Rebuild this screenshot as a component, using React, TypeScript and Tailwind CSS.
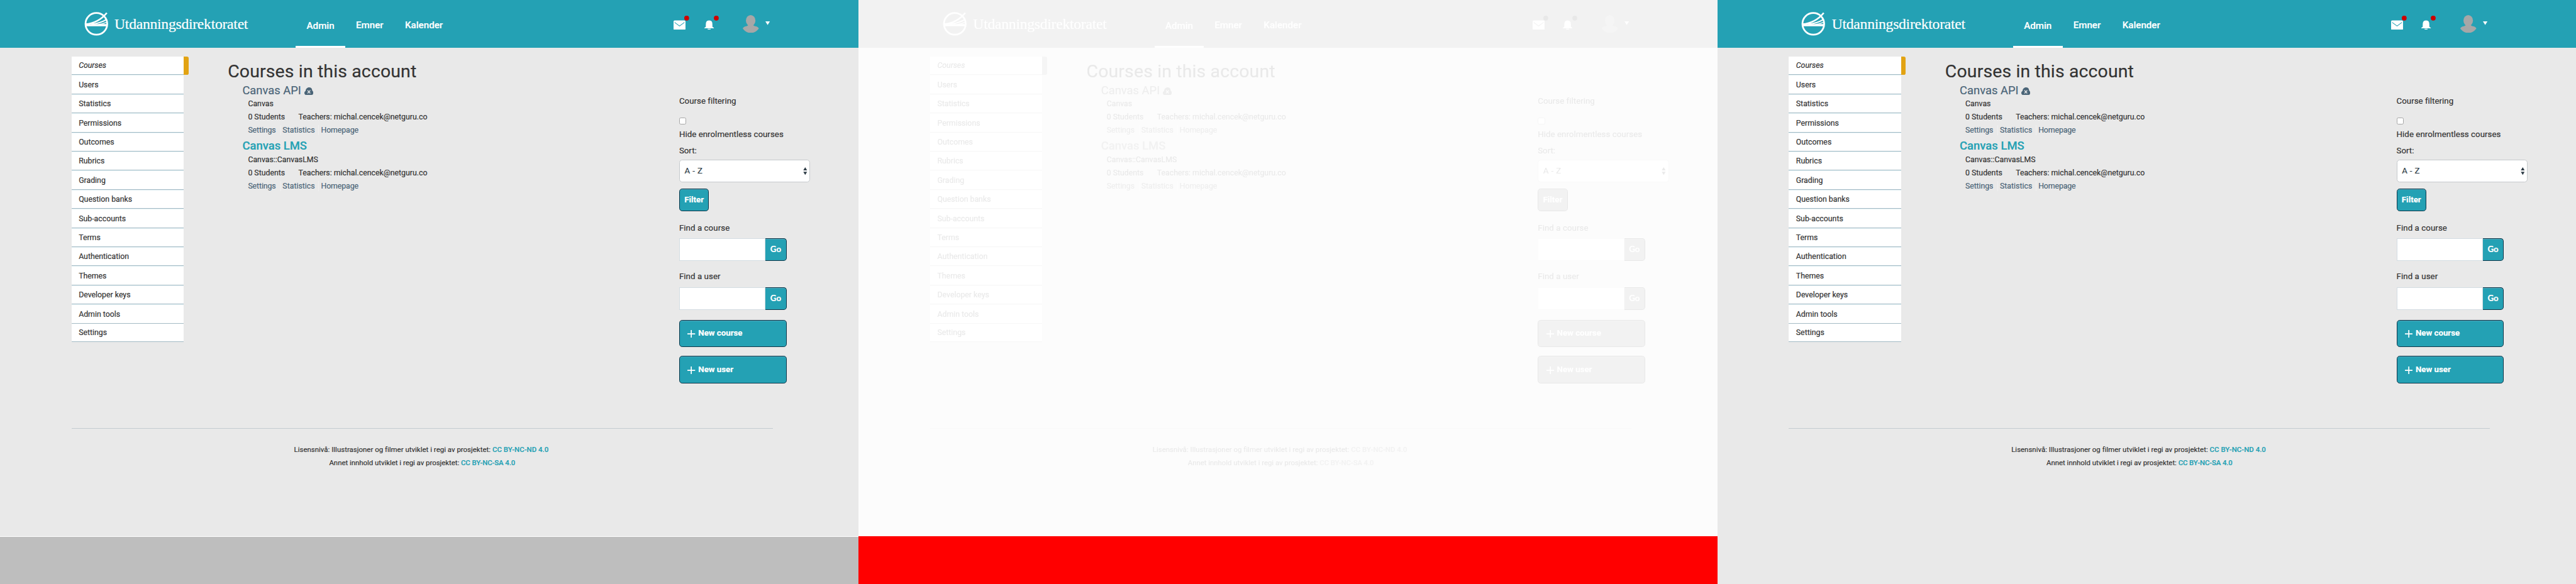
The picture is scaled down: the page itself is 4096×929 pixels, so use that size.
const menu = [
  "Courses", "Users", "Statistics", "Permissions", "Outcomes", "Rubrics", "Grading", "Question banks",
  "Sub-accounts", "Terms", "Authentication", "Themes", "Developer keys", "Admin tools", "Settings",
];

function Logo() {
  return (
    <svg className="mt-5 ml-[141px] h-10 w-10 shrink-0" viewBox="0 0 40 40" fill="none" stroke="#fff">
      <circle cx="20.3" cy="20" r="18.2" strokeWidth="2.9" />
      <path d="M2 22.2H39" strokeWidth="3.6" />
      <path d="M2 20.6C16 19.5 28 13.5 37.8 1.6" strokeWidth="2.8" />
      <path d="M12 20.3C23 19.5 31 16.5 38 12.2" strokeWidth="2.1" />
      <path d="M24 21C29 20.4 33 19.2 38.3 17" strokeWidth="1.5" />
    </svg>
  );
}

function Header() {
  return (
    <header className="flex h-20 bg-[#24a1b4] text-white">
      <Logo />
      <div className="ml-[11px] w-[304px] pt-[26px] font-['Liberation_Serif',serif] text-[25px] leading-[28px] tracking-[-0.3px] whitespace-nowrap">
        Utdanningsdirektoratet
      </div>
      <nav className="flex text-base font-medium">
        <a className="flex w-[83px] items-center justify-center border-b-4 border-white pt-[10px]">Admin</a>
        <a className="flex w-[82px] items-center justify-center pt-[6px]">Emner</a>
        <a className="flex w-[100px] items-center justify-center pt-[6px]">Kalender</a>
      </nav>
      <svg className="mt-[26px] ml-[369px] h-6 w-[27px]" viewBox="0 0 27 24">
        <rect y="8" width="20" height="16" rx="1.8" fill="#fff" />
        <path d="M1.8 11.2 10 17.2l8.2-6" fill="none" stroke="#24a1b4" strokeWidth="1.1" />
        <circle cx="22" cy="4" r="4.1" fill="#cc0000" />
      </svg>
      <svg className="mt-[26px] ml-6 h-6 w-[25px]" viewBox="0 0 25 24">
        <path d="M2.4 18.6C2.6 12.5 2 8 8 8s5.4 4.5 5.6 10.6l2.4 1.6v.8H0v-.8z" fill="#fff" />
        <path d="M5.3 22h5.4c-.3 1.2-1.4 2-2.7 2s-2.4-.8-2.7-2z" fill="#fff" />
        <circle cx="20" cy="4" r="4.1" fill="#cc0000" />
      </svg>
      <svg className="mt-[25px] ml-10 h-[30px] w-[27px]" viewBox="0 0 27 30" fill="#a7a7a7">
        <ellipse cx="13.3" cy="9.2" rx="8" ry="9.2" />
        <path d="M9.5 16h7.6c1 2 3.4 2.3 5.6 3 1.8.6 3.3 1.6 4.3 3.5C24 27.3 19 30 13.5 30S3 27.3 0 22.5c1-1.9 2.5-2.9 4.3-3.5 2.2-.7 4.2-1 5.2-3z" />
      </svg>
      <svg className="mt-9 ml-[11px] h-[6px] w-[8px]" viewBox="0 0 8 6" fill="#fff">
        <path d="M0 0h7.6L3.8 6z" />
      </svg>
    </header>
  );
}

function Sidebar() {
  return (
    <ul className="ml-[120px] w-[196px] pt-[15px] text-[13px]">
      {menu.map((label, i) => (
        <li key={label} className="flex">
          <div className={i < 13 ? "w-[188px] border-b border-[#e3f1f4]" : "w-[188px]"}>
            <div className="flex h-[31px] items-center border-b border-[#a3bac5] bg-white pt-px pl-3">
              <span className={i === 0 ? "italic" : ""}>{label}</span>
            </div>
          </div>
          {i === 0 && <div className="h-[30px] w-2 rounded-r-[3px] bg-[#e2a313]" />}
        </li>
      ))}
    </ul>
  );
}

function Course({ name, account, unpublished }: { name: string; account: string; unpublished?: boolean }) {
  return (
    <section className="mb-1 pl-[24.5px]">
      <h3
        className={
          unpublished
            ? "flex h-6 items-center text-[19.4px] text-[#4b6578]"
            : "flex h-6 items-center text-[19.5px] font-medium text-[#24a1b4]"
        }
      >
        {name}
        {unpublished && (
          <svg className="mt-[3px] ml-[5px] h-[13px] w-[15px]" viewBox="0 0 15 13">
            <path
              d="M3.6 13C1.5 13 0 11.5 0 9.5c0-1.6.8-2.8 2.1-3.3C2 3 4.5 0 8 0c3 0 5 2 5.1 5.2C14.3 6 15 7.5 15 9.2 15 11.5 13.5 13 11.4 13z"
              fill="#4b6578"
            />
            <path d="M5.3 5l4.6 5M9.9 5l-4.6 5" stroke="#e9e9e9" strokeWidth="1.3" />
          </svg>
        )}
      </h3>
      <div className="pl-[9.5px] text-[13px] leading-[22px]">
        <p>{account}</p>
        <p className="flex gap-[22.5px]">
          <span>0 Students</span>
          <span>Teachers: michal.cencek@netguru.co</span>
        </p>
        <p className="flex items-center text-[#4b6578]">
          <a className="w-[54px] tracking-[-0.1px]">Settings</a>
          <span className="mr-[3px] h-4 w-px bg-[#f0f0f0]" />
          <a className="w-[60px]">Statistics</a>
          <span className="mr-[3.5px] h-4 w-px bg-[#f0f0f0]" />
          <a className="tracking-[-0.1px]">Homepage</a>
        </p>
      </div>
    </section>
  );
}

function Search({ label }: { label: string }) {
  return (
    <div className="mb-[17px] h-[65px]">
      <div className="h-[27px] leading-5 tracking-[0.08px]">{label}</div>
      <div className="flex h-[38px] w-[180px]">
        <div className="w-[145px] border border-[#d3dce2] bg-white" />
        <div className="flex w-[35px] items-center justify-center rounded-r-[5px] border border-l-0 border-[#0c3548] bg-[#24a1b4] font-['Lato',sans-serif] font-bold text-white shadow-[inset_0_1px_0_#4fa9bd]">
          Go
        </div>
      </div>
    </div>
  );
}

function WideButton({ label }: { label: string }) {
  return (
    <div className="mb-[15px] flex h-[46px] w-[180px] items-center rounded-[5px] border border-[#0c3548] bg-[#24a1b4] pl-[13px] font-bold text-white shadow-[inset_0_1px_0_#4fa9bd]">
      <svg className="mt-px mr-[5px] h-[13px] w-[13px]" viewBox="0 0 13 13" stroke="#fff" strokeWidth="1.8">
        <path d="M6.5 0v13M0 6.5h13" />
      </svg>
      {label}
    </div>
  );
}

function Filters() {
  return (
    <aside className="pt-20 text-[14px]">
      <div className="h-[37px] pt-[0.5px] leading-5 tracking-[0.03px]">Course filtering</div>
      <div className="h-3 w-3 rounded-[2.5px] border border-[#a6a6a6] bg-white" />
      <div className="mt-[7px] h-[27px] pt-[0.5px] leading-5 tracking-[0.05px]">Hide enrolmentless courses</div>
      <div className="h-[25px] pt-[0.5px] leading-5">Sort:</div>
      <div className="flex h-[38px] w-[220px] items-center justify-between rounded-[5px] border border-[#c5c9cc] bg-white pr-[4px] pl-2 text-[#2d3b45]">
        <span className="tracking-[0.4px]">A - Z</span>
        <svg className="h-[13px] w-[7px]" viewBox="0 0 7 13" fill="#2d3b45">
          <path d="M3.5 0 6.7 5.4H.3zM3.5 13 6.7 7.6H.3z" />
        </svg>
      </div>
      <div className="mt-[10px] flex h-[38px] w-[50px] items-center justify-center rounded-[5px] border border-[#0c3548] bg-[#24a1b4] font-bold text-white shadow-[inset_0_1px_0_#4fa9bd]">
        Filter
      </div>
      <div className="mt-[19px]">
        <Search label="Find a course" />
        <Search label="Find a user" />
      </div>
      <div className="-mt-[7px] pt-[6.5px]">
        <WideButton label="New course" />
        <WideButton label="New user" />
      </div>
    </aside>
  );
}

function Page() {
  return (
    <div className="flex h-[900px] w-[1440px] flex-col bg-[#e9e9e9] font-['Roboto',sans-serif] text-[#333333] [-webkit-text-stroke:0.2px]">
      <Header />
      <div className="flex h-[638px]">
        <Sidebar />
        <main className="w-[823px] pt-[22px] pl-[66px]">
          <h1 className="h-[37.3px] text-[30px] leading-[36px] tracking-[0.15px]">Courses in this account</h1>
          <Course name="Canvas API" account="Canvas" unpublished />
          <Course name="Canvas LMS" account="Canvas::CanvasLMS" />
        </main>
        <Filters />
      </div>
      <footer className="mx-[120px] w-[1176px] border-t border-[#c3cbd0] pt-[25px] text-center text-[12px] leading-[22px]">
        <p className="pr-[3px] tracking-[0.05px]">
          Lisensnivå: Illustrasjoner og filmer utviklet i regi av prosjektet:{" "}
          <a className="font-medium text-[#24a1b4]">CC BY-NC-ND 4.0</a>
        </p>
        <p>
          Annet innhold utviklet i regi av prosjektet:{" "}
          <a className="font-medium tracking-[-0.1px] text-[#24a1b4]">CC BY-NC-SA 4.0</a>
        </p>
      </footer>
    </div>
  );
}

export default function App() {
  return (
    <div className="h-[929px] w-[4096px] overflow-hidden bg-white">
      <div className="flex h-[980px] w-[4320px] [zoom:0.948148]">
        <div className="w-[1440px]">
          <Page />
          <div className="h-20 border-t border-white bg-[#bebebe]" />
        </div>
        <div className="w-[1440px]">
          <div className="opacity-10 grayscale">
            <Page />
          </div>
          <div className="h-20 bg-[#ff0000]" />
        </div>
        <div className="w-[1440px] bg-[#e9e9e9]">
          <Page />
        </div>
      </div>
    </div>
  );
}
